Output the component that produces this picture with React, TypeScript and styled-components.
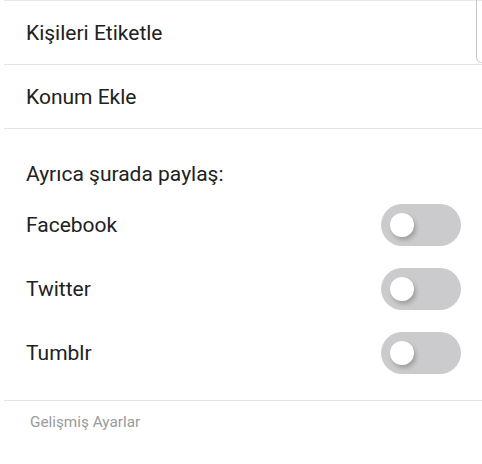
import React, { useState } from 'react'
import styled, { createGlobalStyle } from 'styled-components'

const GlobalStyle = createGlobalStyle`
  html, body {
    margin: 0;
    padding: 0;
    background: #fff;
  }
  body {
    font-family: Roboto, 'Noto Sans', Arial, sans-serif;
    color: #212121;
  }
`

const Page = styled.div`
  position: relative;
  width: 482px;
  height: 464px;
  overflow: hidden;
  background: #fff;
`

const List = styled.div`
  margin-left: 4px;
  border-top: 1px solid #e8e8e8;
`

const ActionRow = styled.div`
  display: flex;
  align-items: center;
  height: 63px;
  padding-left: 22px;
  border-bottom: 1px solid #e4e4e4;
  font-size: 21px;
`

const Section = styled.div`
  padding: 26px 0 15px;
  border-bottom: 1px solid #e4e4e4;
`

const SectionTitle = styled.div`
  display: flex;
  align-items: center;
  height: 38px;
  padding-left: 22px;
  font-size: 21px;
`

const ToggleRow = styled.div`
  display: flex;
  align-items: center;
  justify-content: space-between;
  height: 64px;
  padding: 0 21px 0 22px;
  font-size: 21px;
`

const Track = styled.button<{ $on: boolean }>`
  position: relative;
  width: 80px;
  height: 42px;
  border: none;
  border-radius: 21px;
  padding: 0;
  background: ${(p) => (p.$on ? '#4caf50' : '#cbcbcd')};
  cursor: pointer;
`

const Knob = styled.span<{ $on: boolean }>`
  position: absolute;
  top: 9px;
  left: ${(p) => (p.$on ? '47px' : '9px')};
  width: 24px;
  height: 24px;
  border-radius: 50%;
  background: #fff;
  box-shadow: 2px 3px 4px rgba(0, 0, 0, 0.22);
`

const Advanced = styled.div`
  padding: 12px 0 0 26px;
  font-size: 15.3px;
  color: #9a9a9a;
`

const EdgeOverlay = styled.div`
  position: absolute;
  top: -4px;
  left: 476px;
  width: 20px;
  height: 66px;
  border-left: 1px solid #c4c4c4;
  border-bottom: 1px solid #d8d8d8;
  border-bottom-left-radius: 6px;
`

const Toggle = ({ label }: { label: string }) => {
  const [on, setOn] = useState(false)
  return (
    <ToggleRow>
      <span>{label}</span>
      <Track $on={on} onClick={() => setOn(!on)} aria-label={label}>
        <Knob $on={on} />
      </Track>
    </ToggleRow>
  )
}

const App = () => {
  return (
    <Page>
      <GlobalStyle />
      <List>
        <ActionRow>Kişileri Etiketle</ActionRow>
        <ActionRow>Konum Ekle</ActionRow>
        <Section>
          <SectionTitle>Ayrıca şurada paylaş:</SectionTitle>
          <Toggle label="Facebook" />
          <Toggle label="Twitter" />
          <Toggle label="Tumblr" />
        </Section>
        <Advanced>Gelişmiş Ayarlar</Advanced>
      </List>
      <EdgeOverlay />
    </Page>
  )
}

export default App
